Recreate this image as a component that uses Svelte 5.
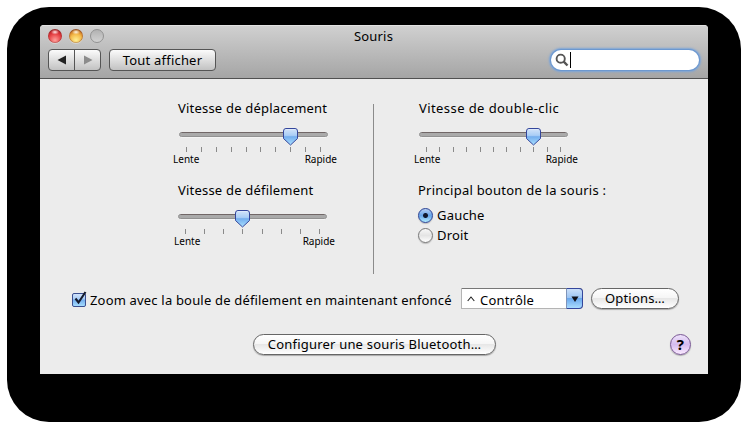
<script>
  let zoom = $state(true);
  let button = $state('gauche');
  const ticks = (n) => Array.from({ length: n }, (_, i) => 8 + Math.round((i * 134) / (n - 1)) - 0.5);
</script>

{#snippet slider(title, count, value, cls)}
  <section class="slider {cls}">
    <h2>{title}</h2>
    <svg class="track" width="149" height="26" viewBox="0 0 149 26">
      <rect x="0.5" y="4.5" width="148" height="4" rx="2" fill="#aaa" stroke="#929292" />
      <path d="M2.5 4.5H146.5" stroke="#716767" />
      <path d="M2 9.5H147" stroke="#f4f4f4" />
      {#each ticks(count) as x}
        <path d="M{x} 19V24" stroke="#8a8a8a" />
      {/each}
      <g transform="translate({value} 0)">
        <path d="M0.5 3Q0.5 .5 3 .5H12Q14.5 .5 14.5 3V10.5L7.5 17L.5 10.5Z" fill="url(#thumb)" stroke="#34469c" />
        <path d="M2.5 1.5H12.5" stroke="#dce9fb" />
      </g>
    </svg>
    <div class="ends"><span>Lente</span><span>Rapide</span></div>
  </section>
{/snippet}

<svg class="defs" width="0" height="0">
  <defs>
    <linearGradient id="thumb" x1="0" y1="0" x2="0" y2="1">
      <stop offset="0" stop-color="#d5e5fa" /><stop offset=".42" stop-color="#a9cdf6" />
      <stop offset=".5" stop-color="#74aeee" /><stop offset="1" stop-color="#a9e0ff" />
    </linearGradient>
  </defs>
</svg>

<div class="shadow">
  <div class="window">
    <header>
      <div class="titlebar">
        <div class="lights"><i class="red"></i><i class="yellow"></i><i class="grey"></i></div>
        <h1>Souris</h1>
      </div>
      <div class="tools">
        <div class="nav">
          <button aria-label="Précédent"><svg width="10" height="10"><path d="M9 .5V9.5L.5 5Z" fill="#222" /></svg></button>
          <button aria-label="Suivant"><svg width="10" height="10"><path d="M1 .5V9.5L9.5 5Z" fill="#8c8c8c" /></svg></button>
        </div>
        <button class="all">Tout afficher</button>
        <div class="search">
          <svg width="14" height="14"><circle cx="5.7" cy="5.7" r="4.1" fill="none" stroke="#555" stroke-width="1.9" /><path d="M8.7 8.7L12.5 12.5" stroke="#555" stroke-width="2.4" /></svg>
          <span class="caret"></span>
        </div>
      </div>
    </header>
    <main>
      <div class="panes">
        <div class="left">
          {@render slider('Vitesse de déplacement', 10, 104, 'move')}
          {@render slider('Vitesse de défilement', 8, 57, 'scroll')}
        </div>
        <div class="right">
          {@render slider('Vitesse de double-clic', 11, 107, 'double')}
          <h2 class="main-button">Principal bouton de la souris :</h2>
          <button class="radio" onclick={() => (button = 'gauche')}><i class:on={button === 'gauche'}></i>Gauche</button>
          <button class="radio" onclick={() => (button = 'droit')}><i class:on={button === 'droit'}></i>Droit</button>
        </div>
      </div>
      <div class="zoom">
        <button class="check" aria-label="Zoom" onclick={() => (zoom = !zoom)}>
          <svg width="16" height="18">
            <rect x=".5" y="3.5" width="13" height="13" rx="1.5" fill="url(#thumb)" stroke="#3b4f8f" />
            {#if zoom}<path d="M3.5 8.5L6.5 12.5L13.5 2" fill="none" stroke="#151a2b" stroke-width="2.1" />{/if}
          </svg>
        </button>
        <span class="zoom-label">Zoom avec la boule de défilement en maintenant enfoncé</span>
        <div class="combo">
          <svg width="8" height="6"><path d="M.7 5L4 1L7.3 5" fill="none" stroke="#222" stroke-width="1.1" /></svg>
          <span>Contrôle</span>
          <b><svg width="8" height="6"><path d="M.5 .5H7.5L4 6Z" fill="#101018" /></svg></b>
        </div>
        <button class="pill options">Options…</button>
      </div>
      <div class="bottom">
        <button class="pill bluetooth">Configurer une souris Bluetooth…</button>
        <button class="help">?</button>
      </div>
    </main>
  </div>
</div>

<style>
  :global(body) { background: #fff; }
  * { box-sizing: border-box; }
  .defs { display: block; }
  button { font: inherit; letter-spacing: inherit; color: inherit; padding: 0; margin: 0; border: 0; background: none; white-space: nowrap; }
  h1, h2 { font: inherit; margin: 0; }
  svg { display: block; flex: none; }
  .shadow { width: 734px; height: 415px; margin: 7px; padding: 18px 33px; background: #000; border-radius: 42px; font: 13px/16px "Noto Sans", "Open Sans", sans-serif; letter-spacing: .2px; color: #000; overflow: hidden; }
  .window { width: 668px; height: 349px; background: #ececec; border-radius: 4px 4px 0 0; overflow: hidden; white-space: nowrap; }
  header { height: 54px; background: linear-gradient(#d0d0d0, #a5a5a5); border-top: 1px solid #e2e2e2; border-bottom: 1px solid #515151; }
  .titlebar { height: 22px; display: grid; grid-template-columns: 1fr auto 1fr; padding: 2px 9px 0 8px; }
  .lights { display: flex; gap: 7px; padding-top: 1px; }
  .lights i { width: 14px; height: 14px; border-radius: 50%; }
  .red { background: radial-gradient(ellipse 4px 2.5px at 50% 22%, #ffe9e9, transparent), radial-gradient(circle at 50% 80%, #ffa09b, #e8484b 45%, #cf2b31 65%, #84242a 95%); }
  .yellow { background: radial-gradient(ellipse 4px 2.5px at 50% 22%, #fff6e4, transparent), radial-gradient(circle at 50% 80%, #fff094, #f4bb4b 45%, #d98b2d 65%, #80431a 95%); }
  .lights .red, .lights .yellow { box-shadow: inset 0 0 1px 0.5px #77302a99, 0 1px 0 #d6d6d6; }
  .grey { background: linear-gradient(#b2b2b2, #d2d2d2); border: 1px solid #929292; }
  .tools { display: flex; padding: 1px 8px 0; }
  .nav { display: flex; width: 53px; height: 22px; border: 1px solid #555; border-radius: 4px; background: linear-gradient(#fbfbfb, #c2c2c2); }
  .nav button { flex: 1; display: flex; align-items: center; justify-content: center; }
  .nav button + button { border-left: 1px solid #555; }
  .all { width: 107px; height: 22px; margin-left: 8px; border: 1px solid #555; border-radius: 4px; background: linear-gradient(#fbfbfb, #c2c2c2); }
  .search { margin-left: auto; margin-right: 1px; width: 148px; height: 20px; margin-top: 1px; border-radius: 10px; background: #fff; display: flex; align-items: center; padding-left: 4px; box-shadow: 0 0 0 1px #6c98d0, 0 0 2px 2px #7ba4d8; }
  .caret { width: 1px; height: 16px; background: #000; margin-left: 1px; }
  main { display: flex; flex-direction: column; }
  .panes { display: flex; height: 170px; margin-top: 25px; }
  .left { width: 334px; border-right: 1px solid #8b8b8b; padding-left: 138px; }
  .right { padding-left: 45px; }
  .slider { height: 82px; margin-top: -4px; }
  .slider + .slider { margin-top: 0; }
  .slider h2 { height: 28px; line-height: 16px; }
  .double h2 { letter-spacing: .42px; }
  .track { margin-left: 1px; overflow: visible; }
  .scroll .track { margin-left: 0; }
  .scroll .ends { margin-left: -4px; width: 161px; }
  .ends { display: flex; justify-content: space-between; width: 164px; margin-left: -5px; font-size: 10px; line-height: 12px; margin-top: -1px; letter-spacing: 0; }
  .right .track { margin-left: 0; }
  .main-button { height: 23px; margin-left: -1px; letter-spacing: .24px; }
  .radio { display: flex; align-items: center; gap: 4px; height: 20px; margin-left: -1px; line-height: 20px; }
  .radio i { width: 15px; height: 15px; border: 1px solid #777; border-radius: 50%; background: linear-gradient(#f8f8f8, #e4e4e4 50%, #fff); box-shadow: 0 1px 1px #bbb; }
  .radio i.on { border-color: #294194; background: radial-gradient(circle, #10182d 0 2px, transparent 3px), linear-gradient(#b6cff3, #66a4e8 50%, #b2ecff); }
  .zoom { display: flex; align-items: flex-start; height: 22px; margin-top: 14px; padding-left: 32px; }
  .check { width: 16px; height: 18px; margin-top: 2px; }
  .zoom-label { width: 373px; padding-left: 2px; padding-top: 4px; letter-spacing: .18px; }
  .combo { width: 122px; height: 21px; display: flex; align-items: center; background: #fff; border: 1px solid #b4b4b4; border-top-color: #777; border-radius: 0 4px 4px 0; padding-left: 5px; }
  .combo span { margin: 2px 0 0 5px; }
  .combo b { margin: -1px -1px -1px auto; width: 17px; height: 21px; display: flex; align-items: center; justify-content: center; border: 1px solid #34469c; border-left-color: #7f94b9; border-radius: 0 4px 4px 0; background: linear-gradient(#cbdff8, #9dc5f3 45%, #6ba8ed 50%, #a9dcff); }
  .pill { height: 21px; border: 1px solid #666; border-radius: 11px; background: linear-gradient(#fff, #f6f6f6 45%, #e7e7e7 50%, #fff); box-shadow: 0 1px 1px #aaa; line-height: 18px; }
  .options { width: 88px; margin-left: 8px; padding-bottom: 2px; }
  .bottom { display: flex; height: 24px; margin-top: 22px; padding-left: 213px; align-items: center; }
  .bluetooth { width: 243px; }
  .help { width: 21px; height: 21px; margin-left: 174px; border: 1px solid #795795; border-radius: 50%; background: linear-gradient(#eee2fb, #d5bcef 50%, #fbeaff); font-weight: bold; font-size: 15px; line-height: 18px; box-shadow: 0 1px 1px #aaa; }
</style>
